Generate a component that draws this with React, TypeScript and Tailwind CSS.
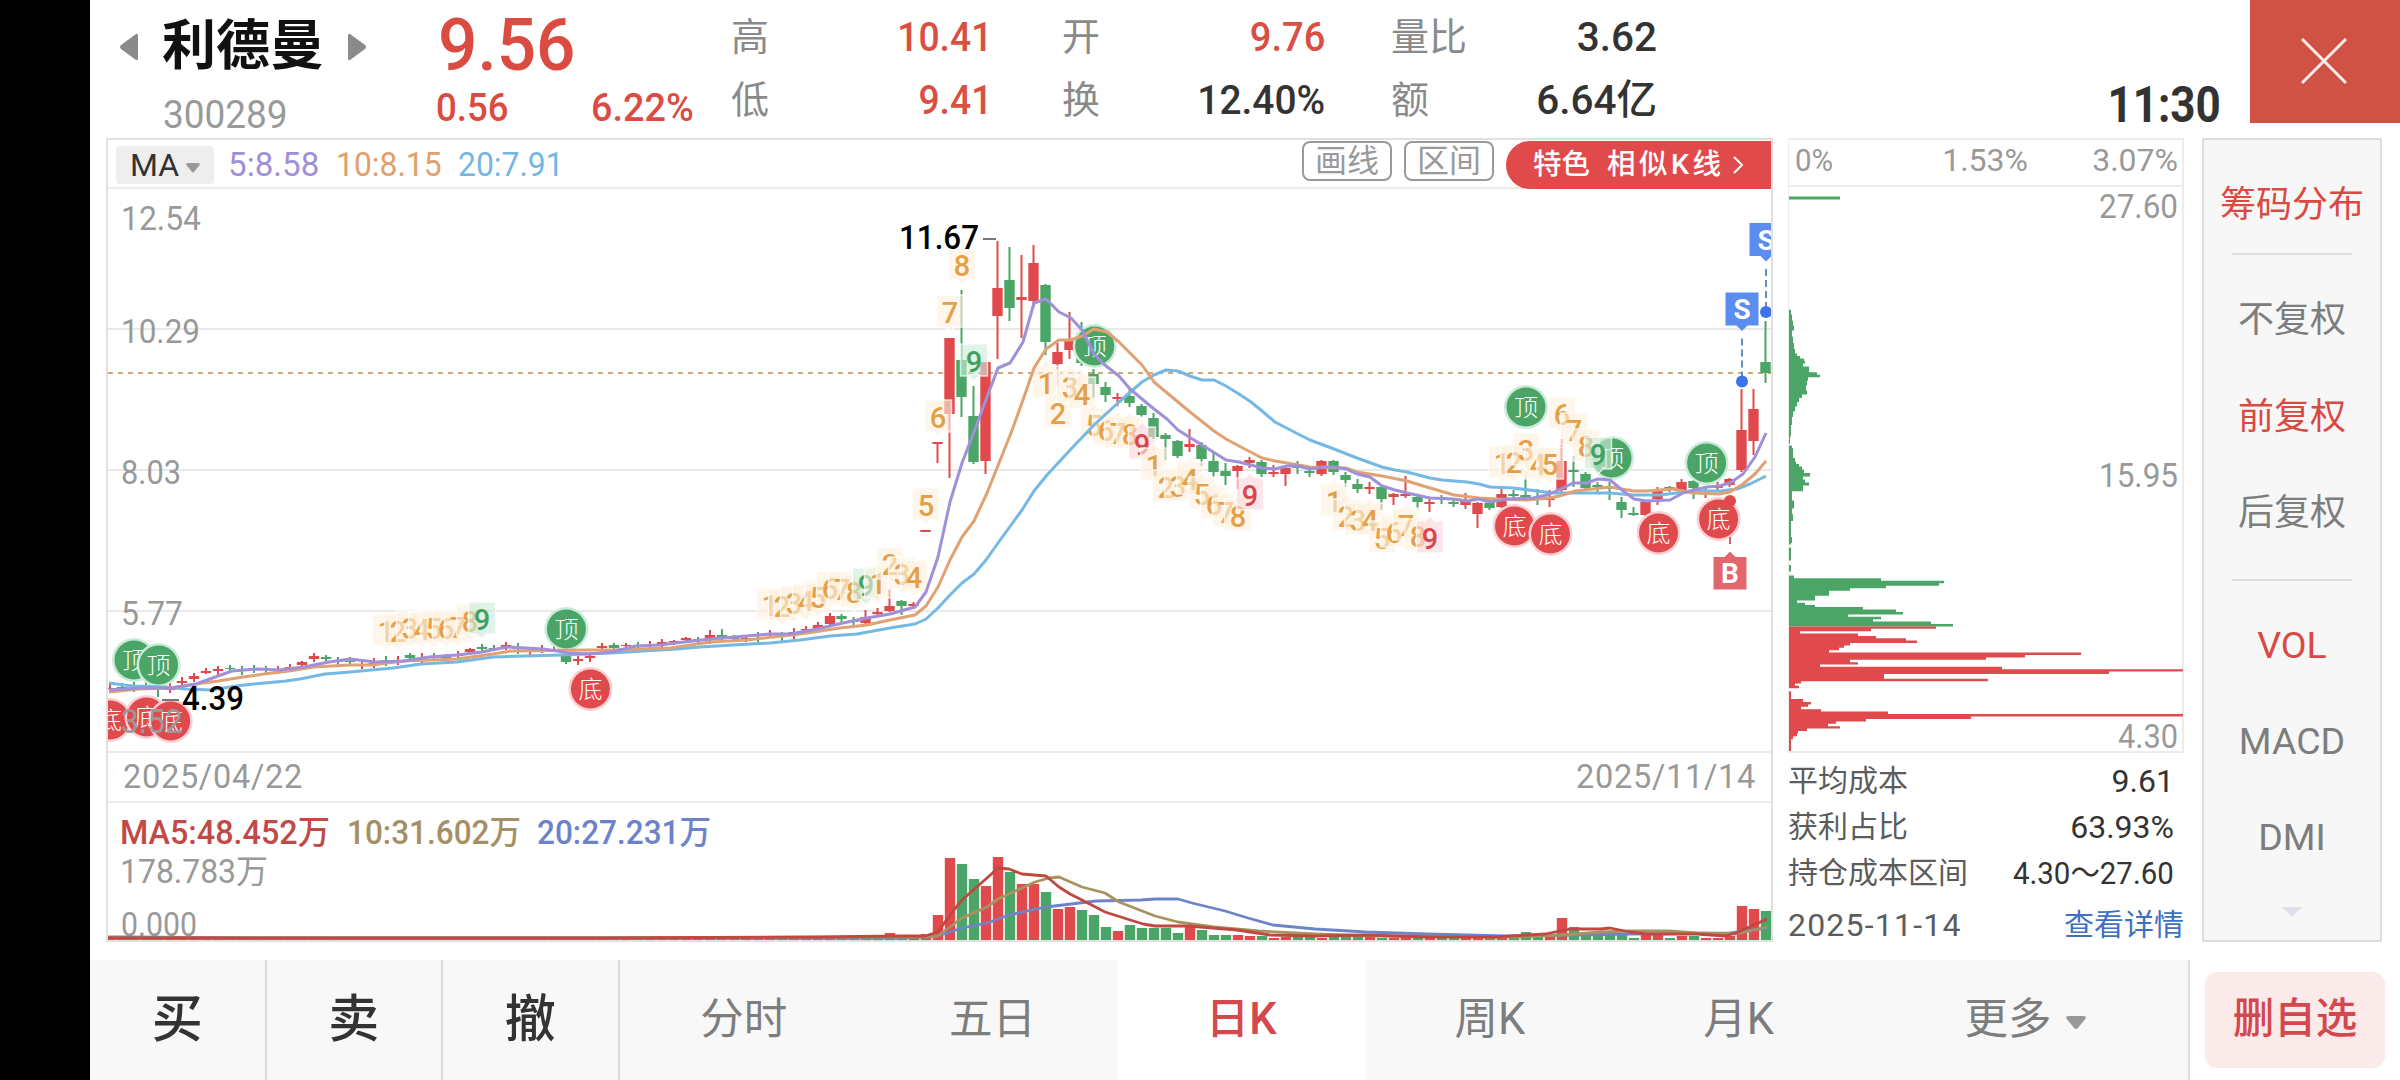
import React, { useState } from "react";

const RED = "#e04a4c";
const GREEN = "#4ba566";

type Dir = "r" | "g";
// [direction, high, body top, body bottom, low]
type Candle = [Dir, number, number, number, number];

const candles: Candle[] = [
  ["r", 684, 688, 689, 693],
  ["g", 683, 687, 688, 691],
  ["g", 682, 686, 687, 692],
  ["g", 680, 685, 686, 690],
  ["g", 682, 686, 688, 697],
  ["r", 682, 686, 690, 693],
  ["r", 677, 681, 683, 685],
  ["r", 673, 676, 679, 682],
  ["r", 668, 671, 673, 674],
  ["r", 666, 669, 671, 675],
  ["g", 665, 668, 669, 672],
  ["g", 666, 670, 671, 675],
  ["g", 665, 668, 669, 673],
  ["g", 666, 669, 670, 674],
  ["r", 666, 669, 670, 674],
  ["r", 664, 667, 668, 672],
  ["r", 661, 662, 665, 666],
  ["r", 653, 656, 659, 662],
  ["g", 655, 657, 659, 662],
  ["g", 657, 661, 662, 666],
  ["g", 657, 661, 662, 665],
  ["r", 660, 664, 666, 669],
  ["r", 658, 663, 664, 668],
  ["g", 656, 660, 661, 666],
  ["r", 656, 660, 661, 665],
  ["g", 653, 655, 658, 661],
  ["r", 653, 658, 661, 663],
  ["g", 653, 657, 658, 661],
  ["g", 654, 657, 658, 661],
  ["r", 651, 655, 656, 658],
  ["r", 648, 649, 652, 654],
  ["g", 644, 647, 649, 651],
  ["g", 645, 648, 649, 651],
  ["r", 642, 645, 647, 650],
  ["g", 643, 647, 649, 654],
  ["r", 648, 651, 652, 655],
  ["r", 645, 649, 650, 653],
  ["r", 646, 649, 650, 652],
  ["g", 655, 656, 662, 664],
  ["r", 656, 659, 661, 665],
  ["r", 653, 656, 658, 662],
  ["r", 643, 646, 648, 651],
  ["g", 643, 645, 648, 650],
  ["r", 643, 645, 646, 651],
  ["g", 642, 645, 646, 650],
  ["r", 641, 645, 646, 650],
  ["r", 639, 642, 645, 647],
  ["r", 640, 641, 642, 645],
  ["r", 637, 638, 640, 643],
  ["g", 637, 639, 640, 643],
  ["r", 630, 635, 638, 644],
  ["g", 629, 635, 637, 640],
  ["g", 635, 638, 639, 642],
  ["r", 635, 638, 639, 642],
  ["g", 632, 634, 636, 642],
  ["r", 630, 633, 635, 638],
  ["g", 632, 634, 636, 641],
  ["r", 628, 632, 634, 639],
  ["r", 626, 629, 630, 633],
  ["r", 622, 625, 628, 630],
  ["r", 613, 616, 624, 625],
  ["g", 614, 616, 619, 622],
  ["g", 617, 620, 622, 625],
  ["r", 610, 617, 623, 624],
  ["r", 608, 612, 614, 617],
  ["r", 589, 606, 611, 612],
  ["g", 600, 601, 606, 615],
  ["r", 602, 604, 606, 609],
  ["r", 530, 530, 532, 532],
  ["r", 442, 442, 444, 463],
  ["r", 338, 338, 414, 478],
  ["g", 290, 360, 397, 417],
  ["g", 386, 416, 462, 464],
  ["r", 362, 362, 461, 474],
  ["r", 241, 288, 316, 359],
  ["g", 247, 280, 308, 321],
  ["r", 255, 297, 300, 338],
  ["r", 245, 263, 301, 307],
  ["g", 284, 285, 342, 355],
  ["r", 343, 352, 364, 386],
  ["r", 312, 340, 350, 359],
  ["g", 322, 333, 363, 366],
  ["g", 369, 374, 384, 398],
  ["g", 382, 387, 395, 402],
  ["r", 393, 397, 399, 406],
  ["g", 390, 396, 403, 407],
  ["g", 404, 406, 415, 417],
  ["g", 413, 418, 437, 439],
  ["g", 433, 435, 439, 460],
  ["g", 440, 441, 456, 458],
  ["r", 429, 444, 447, 452],
  ["g", 442, 445, 459, 466],
  ["g", 453, 461, 472, 477],
  ["g", 463, 471, 476, 485],
  ["r", 465, 466, 471, 489],
  ["r", 457, 460, 463, 468],
  ["g", 460, 462, 474, 477],
  ["r", 465, 472, 474, 477],
  ["r", 467, 468, 474, 486],
  ["g", 461, 466, 468, 474],
  ["g", 469, 471, 473, 477],
  ["r", 460, 461, 474, 476],
  ["g", 460, 461, 472, 475],
  ["g", 472, 475, 480, 487],
  ["g", 479, 484, 489, 493],
  ["r", 482, 487, 489, 494],
  ["g", 486, 487, 499, 510],
  ["r", 493, 494, 497, 505],
  ["r", 476, 494, 496, 498],
  ["g", 494, 497, 502, 509],
  ["r", 498, 502, 504, 512],
  ["g", 495, 497, 499, 504],
  ["g", 500, 502, 504, 507],
  ["r", 493, 501, 505, 509],
  ["r", 502, 503, 514, 528],
  ["g", 500, 503, 508, 510],
  ["r", 489, 494, 507, 508],
  ["g", 490, 494, 496, 499],
  ["g", 475, 495, 497, 500],
  ["g", 489, 497, 499, 505],
  ["r", 490, 498, 500, 507],
  ["r", 439, 461, 490, 493],
  ["g", 456, 470, 472, 487],
  ["g", 472, 474, 488, 490],
  ["g", 482, 485, 487, 493],
  ["g", 482, 488, 489, 500],
  ["g", 497, 502, 510, 518],
  ["g", 507, 513, 515, 516],
  ["r", 501, 502, 515, 516],
  ["r", 487, 490, 499, 505],
  ["g", 486, 487, 489, 492],
  ["r", 479, 482, 490, 492],
  ["g", 480, 481, 488, 499],
  ["r", 487, 491, 492, 498],
  ["r", 482, 486, 488, 492],
  ["r", 478, 479, 485, 487],
  ["r", 389, 430, 470, 472],
  ["r", 389, 409, 441, 455],
  ["g", 321, 362, 373, 383],
];

const candleX = (i: number) => 110 + i * 12;

const ma5 =
  "109,690 139,688 171,688 196,684 218,676 232,671 257,669 279,670 304,667 329,662 350,659 375,662 404,661 429,657 457,655 482,652 507,647 543,649 557,651 568,653 589,654 611,652 636,646 660,645 675,643 711,639 770,634 790,634 817,629 843,623 867,618 890,614 915,607 926,592 938,557 950,502 962,463 974,432 987,397 998,368 1010,363 1023,342 1034,303 1046,299 1059,312 1071,318 1082,330 1094,354 1106,366 1119,376 1130,389 1142,399 1154,409 1167,419 1178,430 1202,445 1226,460 1239,462 1251,465 1262,468 1275,469 1287,466 1298,466 1310,469 1323,467 1334,467 1346,469 1357,474 1370,477 1382,486 1395,490 1407,493 1430,498 1453,499 1467,501 1479,499 1490,502 1507,499 1533,498 1547,495 1563,488 1573,483 1586,483 1598,479 1610,480 1622,490 1634,499 1646,501 1670,500 1683,493 1694,490 1707,487 1719,486 1730,483 1743,474 1755,457 1766,433";
const ma10 =
  "109,692 139,689 171,688 196,684 218,681 243,677 264,674 289,671 314,667 350,665 371,665 404,661 457,659 493,654 511,651 589,650 615,650 640,649 670,648 711,642 747,640 800,634 840,628 867,625 890,620 915,615 926,606 938,587 950,560 962,537 974,521 987,493 999,463 1011,433 1023,400 1034,368 1046,349 1059,340 1071,340 1082,336 1094,329 1107,332 1119,342 1130,353 1142,365 1154,382 1178,402 1190,412 1214,431 1226,439 1239,446 1262,458 1275,461 1287,463 1310,467 1346,468 1357,472 1382,476 1407,481 1430,488 1454,495 1479,498 1497,499 1527,500 1550,498 1563,495 1575,491 1610,487 1622,489 1634,491 1646,491 1673,489 1693,493 1719,494 1730,492 1743,484 1755,474 1766,461";
const ma20 =
  "109,683 132,686 164,687 186,689 211,690 236,686 254,684 286,681 300,679 325,674 350,672 393,668 421,664 457,662 493,657 525,656 561,655 611,653 677,649 700,647 733,645 770,643 800,640 830,636 857,634 890,628 915,624 926,619 938,608 950,595 962,583 974,574 986,560 998,543 1022,510 1034,491 1047,475 1071,449 1094,425 1119,402 1142,382 1154,375 1166,370 1178,371 1190,376 1202,380 1214,380 1226,386 1239,394 1251,402 1262,411 1275,422 1300,435 1310,440 1334,449 1357,458 1382,467 1395,470 1407,472 1430,478 1442,480 1467,482 1479,484 1490,487 1513,488 1553,493 1610,493 1633,495 1660,495 1693,491 1720,491 1737,489 1750,484 1766,476";

type Tone = "o" | "g" | "r";
// [candle index, digit, top of the box, tone]
type Count = [number, string, number, Tone];

const countsAbove: Count[] = [
  [23, "1", 614, "o"],
  [24, "2", 614, "o"],
  [25, "3", 611, "o"],
  [26, "4", 612, "o"],
  [27, "5", 611, "o"],
  [28, "6", 611, "o"],
  [29, "7", 610, "o"],
  [30, "8", 604, "o"],
  [31, "9", 602, "g"],
  [55, "1", 588, "o"],
  [56, "2", 589, "o"],
  [57, "3", 586, "o"],
  [58, "4", 584, "o"],
  [59, "5", 580, "o"],
  [60, "6", 571, "o"],
  [61, "7", 572, "o"],
  [62, "8", 575, "o"],
  [63, "9", 568, "g"],
  [64, "1", 566, "o"],
  [65, "2", 547, "o"],
  [66, "3", 557, "o"],
  [67, "4", 560, "o"],
  [68, "5", 488, "o"],
  [69, "6", 400, "o"],
  [70, "7", 295, "o"],
  [71, "8", 248, "o"],
  [72, "9", 344, "g"],
  [116, "1", 446, "o"],
  [117, "2", 445, "o"],
  [118, "3", 433, "o"],
  [119, "4", 447, "o"],
  [120, "5", 447, "o"],
  [121, "6", 397, "o"],
  [122, "7", 413, "o"],
  [123, "8", 429, "o"],
  [124, "9", 437, "g"],
];

const countsBelow: Count[] = [
  [78, "1", 366, "o"],
  [79, "2", 396, "o"],
  [80, "3", 370, "o"],
  [81, "4", 377, "o"],
  [82, "5", 408, "o"],
  [83, "6", 413, "o"],
  [84, "7", 416, "o"],
  [85, "8", 417, "o"],
  [86, "9", 427, "r"],
  [87, "1", 448, "o"],
  [88, "2", 470, "o"],
  [89, "3", 469, "o"],
  [90, "4", 462, "o"],
  [91, "5", 477, "o"],
  [92, "6", 487, "o"],
  [93, "7", 495, "o"],
  [94, "8", 499, "o"],
  [95, "9", 478, "r"],
  [102, "1", 484, "o"],
  [103, "2", 499, "o"],
  [104, "3", 503, "o"],
  [105, "4", 503, "o"],
  [106, "5", 521, "o"],
  [107, "6", 515, "o"],
  [108, "7", 508, "o"],
  [109, "8", 519, "o"],
  [110, "9", 521, "r"],
];

const toneFill = { o: "#fdf0df", g: "#cbecda", r: "#fbd6dc" };
const toneText = { o: "#e3a048", g: "#3fa262", r: "#d9454c" };

const tops: [number, number][] = [
  [134, 660],
  [158.6, 665],
  [566.4, 629],
  [1094.7, 346],
  [1526, 407],
  [1612, 458],
  [1706.6, 463],
];
const bottoms: [number, number][] = [
  [110, 720],
  [146.5, 717],
  [170.7, 721],
  [590.4, 689],
  [1514.5, 526],
  [1550.5, 534],
  [1658.5, 533],
  [1718.6, 519],
];

const volumes: number[] = [
  ...Array(60).fill(2),
  3, 3, 4, 3, 4, 7, 5, 4, 6,
  25, 82, 76, 61, 54, 83, 68, 56, 56, 48, 31, 33, 30, 25, 13, 9, 15, 12, 12, 12,
  7, 13, 10, 5, 5, 5, 4, 4, 2, 3, 4, 3, 2, 4, 4, 4, 3, 2, 2, 3, 2, 2, 2, 2, 2, 2,
  2, 3, 4, 8, 5, 3, 22, 13, 7, 8, 8, 6, 2, 5, 5, 2, 4, 4, 2, 2, 4, 34, 31, 29,
];

const volMa5 =
  "108,938 600,938 820,937 900,936 925,936 938,932 950,915 962,900 987,878 998,868 1009,869 1022,874 1046,876 1059,887 1070,894 1082,900 1105,912 1143,924 1155,926 1191,926 1200,927 1237,930 1270,935 1315,936 1366,935 1427,937 1495,937 1545,934 1570,929 1601,929 1610,928 1630,932 1646,934 1697,934 1725,936 1736,933 1767,919";
const volMa10 =
  "108,938 600,938 900,937 925,937 938,936 962,918 987,907 998,899 1035,882 1049,878 1059,877 1082,887 1105,893 1119,902 1155,916 1178,922 1214,927 1259,931 1315,934 1377,936 1517,937 1562,935 1601,932 1630,931 1669,931 1697,933 1736,934 1767,927";
const volMa20 =
  "108,937 130,937 250,938 900,938 925,937 938,936 962,928 987,923 1009,915 1046,907 1096,901 1141,900 1155,899 1178,899 1192,903 1225,911 1248,918 1273,925 1315,929 1366,932 1427,934 1506,936 1573,935 1630,934 1730,933 1753,930 1767,928";

// [y, width] of every price level in the cost distribution
const chipsHigh: [number, number][] = [
  [311, 2], [318, 3], [323, 4], [328, 5], [333, 3], [340, 4], [346, 5], [352, 6],
  [355, 8], [357, 11], [360, 15], [362, 16], [365, 14], [368, 20], [371, 20],
  [373.5, 28], [376, 31], [378.5, 19], [383, 18], [388, 17], [393, 18], [396, 13],
  [400, 10], [404, 8], [409, 6], [414, 4], [420, 3], [430, 2], [443, 1], [445, 0],
  [446, 3], [450, 4], [456, 4], [460, 6], [463, 7], [465, 10], [468, 13], [471, 15],
  [475, 21], [478, 14], [481, 16], [484, 20], [487, 14], [490, 14], [492.5, 3],
  [498, 3], [503, 5], [507, 5], [510, 3], [518, 4], [524, 2], [532, 2], [542, 3],
  [544, 2], [545, 0], [550, 2], [560, 2], [561, 0], [569, 2], [574, 0], [577, 5],
  [579.6, 92], [582, 155], [584.7, 150], [587, 97], [589.6, 61], [592, 40],
  [594.6, 40], [597, 26], [599.3, 26], [601.6, 8], [603.8, 16], [606, 26],
  [608.2, 74], [610.8, 107], [613.3, 114], [615.7, 59], [618, 92], [620.4, 84],
  [622.8, 142], [625.2, 164],
];
const chipsLow: [number, number][] = [
  [627.6, 147], [630, 82], [632.4, 11], [634.8, 69], [637, 87], [639.4, 117],
  [641.8, 128], [644.2, 61], [646.6, 55], [649, 50], [651.3, 40], [653.7, 292],
  [656.2, 236], [658.6, 197], [661, 61], [663.3, 69], [665.6, 31], [668, 213],
  [670.3, 395], [672.7, 320], [675.2, 95], [677.6, 95], [680, 199], [682.4, 12],
  [684.7, 6], [687, 10], [689.3, 0], [693, 2], [697, 2], [700.8, 14], [703.4, 22],
  [705.7, 19], [708, 12], [710.4, 32], [712.8, 99], [715.3, 395], [717.8, 182],
  [720.2, 77], [722.6, 47], [725, 39], [727.4, 51], [729.8, 18], [732, 9],
  [735, 8], [737.5, 4], [741, 2], [750, 2],
];

const stepPath = (rows: [number, number][]) => {
  let d = `M0 ${rows[0][0] - 1.2}`;
  rows.forEach(([y, w], i) => {
    const next = rows[i + 1];
    const end = next ? (y + next[0]) / 2 : y + 1.2;
    d += `H${w}V${end}`;
  });
  return `${d}H0Z`;
};

interface LabelProps {
  x: number;
  y: number;
  w: number;
  fill?: string;
  weight?: number;
  children: string;
}

const Label: React.FC<LabelProps> = ({ x, y, w, fill = "#999", weight = 400, children }) => (
  <text
    x={x}
    y={y}
    fill={fill}
    fontSize={32.5}
    fontWeight={weight}
    textLength={w}
    lengthAdjust="spacingAndGlyphs"
  >
    {children}
  </text>
);

const CountBadge: React.FC<{ item: Count; below?: boolean }> = ({ item, below }) => {
  const [i, digit, top, tone] = item;
  const x = candleX(i);
  const d = below
    ? `M${x - 13.5} ${top}H${x - 5}L${x} ${top - 5}L${x + 5} ${top}H${x + 13.5}V${top + 32}H${x - 13.5}Z`
    : `M${x - 13.5} ${top}H${x + 13.5}V${top + 32}H${x + 5}L${x} ${top + 37}L${x - 5} ${top + 32}H${x - 13.5}Z`;
  return (
    <g>
      <path d={d} fill={toneFill[tone]} fillOpacity={0.62} stroke="#fff" strokeOpacity={0.7} strokeWidth={1.5} />
      <text x={x} y={top + 28} textAnchor="middle" fontSize={29} fontWeight={500} fill={toneText[tone]}>
        {digit}
      </text>
    </g>
  );
};

const Signal: React.FC<{ x: number; y: number; top?: boolean }> = ({ x, y, top }) => (
  <g>
    <circle cx={x} cy={y} r={22} fill={top ? "#c9ecd8" : "#fad0d5"} />
    <circle cx={x} cy={y} r={19.5} fill={top ? GREEN : RED} />
    <text x={x} y={y + 9} textAnchor="middle" fontSize={24} fontWeight={300} fill="#fff">
      {top ? "顶" : "底"}
    </text>
  </g>
);

const SellTag: React.FC<{ x: number; y: number }> = ({ x, y }) => (
  <g>
    <path d={`M${x - 16.5} ${y}h33v33h-11l-5.500 5.500l-5.500 -5.500h-11z`} fill="#5b8cf0" />
    <text x={x} y={y + 26.5} textAnchor="middle" fontSize={28} fontWeight={700} fill="#fff">
      S
    </text>
    <path d={`M${x} ${y + 46}v38`} stroke="#5f8fc4" strokeWidth={2} strokeDasharray="7 4" />
    <circle cx={x} cy={y + 89} r={6} fill="#3d73ea" />
  </g>
);

const PriceChart: React.FC = () => (
  <svg viewBox="108 189 1663 562" className="block h-[562px] w-[1663px]">
    {[329, 470, 611].map((y) => (
      <path key={y} d={`M108 ${y}H1771`} stroke="#e9e9e9" strokeWidth={2} />
    ))}
    <path d="M108 373H1771" stroke="#c8ab82" strokeWidth={2} strokeDasharray="5 5" />

    {candles.map(([dir, high, top, bottom, low], i) => {
      const x = candleX(i) - (i > 60 ? 0.5 : 0);
      const color = dir === "r" ? RED : GREEN;
      return (
        <g key={i} fill={color}>
          <rect x={x - 1} y={high} width={2} height={low - high} />
          <rect x={x - 5.2} y={top} width={10.4} height={bottom - top} />
        </g>
      );
    })}

    {tops.map(([x, y]) => (
      <Signal key={`${x}-${y}`} x={x} y={y} top />
    ))}
    {bottoms.map(([x, y]) => (
      <Signal key={`${x}-${y}`} x={x} y={y} />
    ))}

    {countsAbove.map((item) => (
      <CountBadge key={item[0]} item={item} />
    ))}
    {countsBelow.map((item) => (
      <CountBadge key={item[0]} item={item} below />
    ))}

    <g fill="none" strokeWidth={3} strokeLinejoin="round">
      <polyline points={ma20} stroke="#76b8e4" />
      <polyline points={ma10} stroke="#e0a273" />
      <polyline points={ma5} stroke="#a08fd9" />
    </g>

    <SellTag x={1742} y={292.5} />
    <SellTag x={1766} y={223} />
    <circle cx={1730} cy={501} r={6} fill={RED} />
    <path d="M1730 537v11" stroke="#d0646a" strokeWidth={2} strokeDasharray="7 4" />
    <path d="M1713.500 557h11l5.500 -5.500l5.500 5.500h11v32.500h-33z" fill="#e2666c" />
    <text x={1730} y={583} textAnchor="middle" fontSize={28} fontWeight={700} fill="#fff">
      B
    </text>

    <Label x={121} y={230} w={80}>12.54</Label>
    <Label x={121} y={343} w={79}>10.29</Label>
    <Label x={121} y={484} w={60}>8.03</Label>
    <Label x={121} y={625} w={62}>5.77</Label>
    <Label x={121} y={733} w={62}>3.52</Label>

    <path d="M983 239H996M162 700H179" stroke="#777" strokeWidth={2} />
    <Label x={899} y={249} w={80} fill="#000" weight={500}>11.67</Label>
    <Label x={182} y={710} w={62} fill="#000" weight={500}>4.39</Label>
  </svg>
);

const VolumeChart: React.FC = () => (
  <svg viewBox="108 803 1663 137" className="block h-[137px] w-[1663px]">
    <Label x={120} y={844} w={210} fill="#c04a48" weight={500}>MA5:48.452万</Label>
    <Label x={347} y={844} w={174} fill="#a58f64" weight={500}>10:31.602万</Label>
    <Label x={537} y={844} w={174} fill="#6c82cb" weight={500}>20:27.231万</Label>
    <Label x={120} y={883} w={148}>178.783万</Label>
    <Label x={121} y={936} w={76}>0.000</Label>
    {volumes.map((h, i) => (
      <rect
        key={i}
        x={candleX(i) - 5.2}
        y={940 - h}
        width={10.4}
        height={h}
        fill={candles[i][0] === "r" ? RED : GREEN}
      />
    ))}
    <g fill="none" strokeWidth={2.8} strokeLinejoin="round">
      <polyline points={volMa20} stroke="#6f84c8" />
      <polyline points={volMa10} stroke="#a8925f" />
      <polyline points={volMa5} stroke="#c04840" />
    </g>
  </svg>
);

const quotes = [
  { label: "高", value: "10.41", style: "pr-[70px]", color: "scale-x-[.92] text-[#d94f43]" },
  { label: "开", value: "9.76", style: "pr-[66px]", color: "scale-x-[.94] text-[#d94f43]" },
  { label: "量比", value: "3.62", style: "pr-[2px]", color: "scale-x-[1] text-[#333]" },
  { label: "低", value: "9.41", style: "pr-[70px]", color: "scale-x-[.92] text-[#d94f43]" },
  { label: "换", value: "12.40%", style: "pr-[66px]", color: "scale-x-[.96] text-[#333]" },
  { label: "额", value: "6.64亿", style: "pr-[2px]", color: "scale-x-[1] text-[#333]" },
];

const Header: React.FC = () => (
  <header className="flex h-[138px] shrink-0">
    <div className="w-[348px] pl-[30px] pt-[17px]">
      <div className="flex h-[60px] items-center">
        <svg viewBox="0 0 18 28" className="h-7 w-[18px] fill-[#8a8a8a]">
          <path d="M16 1Q18 0 18 3V25Q18 28 16 27L1 16Q-1 14 1 12Z" />
        </svg>
        <h1 className="ml-[24px] text-[54px] font-bold leading-[64px] text-[#111]">利德曼</h1>
        <svg viewBox="0 0 18 28" className="ml-[24px] h-7 w-[18px] shrink-0 fill-[#8a8a8a]">
          <path d="M2 1Q0 0 0 3V25Q0 28 2 27L17 16Q19 14 17 12Z" />
        </svg>
      </div>
      <p className="ml-[43px] origin-left scale-x-[.96] text-[38.500px] leading-[75px] text-[#999]">300289</p>
    </div>
    <div className="w-[293px] text-[#dc4b41]">
      <p className="mt-[15px] origin-left scale-x-[.95] text-[73px] font-medium leading-[60px]">9.56</p>
      <div className="flex w-[256px] justify-between text-[38.500px] font-medium leading-[65px]">
        <span className="-ml-0.5 origin-left scale-x-[.95]">0.56</span>
        <span className="origin-right scale-x-[.98]">6.22%</span>
      </div>
    </div>
    <div className="grid grid-cols-[331px_329px_268px] content-start pt-[6px] leading-[63px]">
      {quotes.map((q) => (
        <div key={q.label} className={`flex justify-between ${q.style}`}>
          <span className="text-[38px] text-[#8a8a8a]">{q.label}</span>
          <span className={`origin-right text-[40.500px] font-medium ${q.color}`}>{q.value}</span>
        </div>
      ))}
    </div>
    <div className="ml-auto flex">
      <time className="mr-[29px] origin-right scale-x-[.88] pt-[75px] text-[50px] font-bold leading-[60px] text-[#333]">11:30</time>
      <button className="flex h-[123px] w-[150px] items-center justify-center bg-[#d05244]">
        <svg viewBox="0 0 46 46" className="-mt-0.5 -ml-0.5 h-[46px] w-[46px]">
          <path d="M1 1L45 45M45 1L1 45" stroke="#fdeceb" strokeWidth={3} />
        </svg>
      </button>
    </div>
  </header>
);

const ChartPanel: React.FC = () => (
  <section className="w-[1667px] border-2 border-[#e0e0e0]">
    <div className="flex h-[49px] items-start border-b-2 border-[#ececec]">
      <button className="ml-2 mt-1.5 flex h-[38px] w-[98px] items-center justify-center gap-[7px] rounded bg-[#eee] text-[32px] text-[#333]">
        <span>MA</span>
        <svg viewBox="0 0 14 10" className="mt-1.5 h-2.5 w-3.5 fill-[#999]">
          <path d="M0 1.500Q0 0 2 0H12Q14 0 14 1.500L8 9Q7 10 6 9Z" />
        </svg>
      </button>
      <div className="flex text-[32.500px] leading-[50px]">
        <span className="ml-[14px] w-[108px] origin-left scale-x-[1.02] text-[#a08fd8]">5:8.58</span>
        <span className="w-[122px] origin-left scale-x-[.98] text-[#e0a06e]">10:8.15</span>
        <span className="origin-left scale-x-[.98] text-[#74b6e3]">20:7.91</span>
      </div>
      <div className="ml-auto flex pt-px">
        <button className="mr-3 h-10 w-[90px] rounded-lg border-2 border-[#999] text-[32px] leading-[36px] text-[#999]">画线</button>
        <button className="mr-3 h-10 w-[90px] rounded-lg border-2 border-[#999] text-[32px] leading-[36px] text-[#999]">区间</button>
        <button className="flex h-12 w-[265px] items-center rounded-l-full bg-[#e14a4b] pl-[27px] text-[28.500px] font-medium text-white">
          <span>特色</span>
          <span className="ml-[17px] tracking-[3.500px]">相似K线</span>
          <svg viewBox="0 0 10 18" className="ml-2 h-[18px] w-2.5 fill-none stroke-white">
            <path d="M1 1L9 9L1 17" strokeWidth={2} />
          </svg>
        </button>
      </div>
    </div>
    <PriceChart />
    <div className="flex h-[52px] justify-between border-y-2 border-[#ececec] px-[15px] text-[32.500px] leading-[48px] text-[#999]">
      <span className="tracking-[.7px]">2025/04/22</span>
      <span className="tracking-[.7px]">2025/11/14</span>
    </div>
    <VolumeChart />
  </section>
);

const chipStats = [
  { label: "平均成本", value: "9.61" },
  { label: "获利占比", value: "63.93%" },
  { label: "持仓成本区间", value: "4.30～27.60" },
];

const ChipPanel: React.FC = () => (
  <section className="ml-[15px] w-[396px]">
    <div className="border-2 border-l border-[#ececec]">
      <div className="flex h-[47px] justify-between border-b-2 border-[#ececec] pl-1.5 pr-1 text-[32px] leading-[40px] text-[#999]">
        <span className="w-[83px] origin-left scale-x-[.92]">0%</span>
        <span className="origin-center">1.53%</span>
        <span className="origin-right">3.07%</span>
      </div>
      <svg viewBox="0 187 393 564" className="-ml-px block h-[564px] w-[395px]">
        <rect x={0} y={196.5} width={51} height={3} fill={GREEN} />
        <path d={stepPath(chipsHigh)} fill={GREEN} />
        <path d={stepPath(chipsLow)} fill={RED} />
        <Label x={310} y={218} w={79}>27.60</Label>
        <Label x={310} y={487} w={79}>15.95</Label>
        <Label x={329} y={748} w={60}>4.30</Label>
      </svg>
    </div>
    <dl className="pt-[5px] leading-[46px]">
      {chipStats.map((s) => (
        <div key={s.label} className="flex justify-between pr-2.5">
          <dt className="text-[30px] text-[#5c5c5c]">{s.label}</dt>
          <dd
            className={`origin-right text-[32px] text-[#333] ${
              s.value.includes("～") ? "scale-x-[.92]" : "scale-x-[1]"
            }`}
          >
            {s.value}
          </dd>
        </div>
      ))}
    </dl>
    <div className="flex justify-between pt-[2px] text-[30px] leading-[54px]">
      <span className="text-[32px] tracking-[1.200px] text-[#5c5c5c]">2025-11-14</span>
      <a className="text-[#3f70c2]">查看详情</a>
    </div>
  </section>
);

const SideMenu: React.FC = () => {
  const [adjust, setAdjust] = useState("前复权");
  const [indicator, setIndicator] = useState("VOL");

  return (
    <aside className="ml-[18px] flex h-[804px] w-[180px] flex-col items-center border-2 border-[#ddd] bg-[#f7f7f7] text-[36px] text-[#7d7d7d]">
      <button className="h-[113px] pt-4 text-[#d94a42]">筹码分布</button>
      <hr className="w-[120px] border-t-2 border-[#dcdcdc]" />
      <div className="flex flex-col pt-[17px]">
        {["不复权", "前复权", "后复权"].map((name) => (
          <button
            key={name}
            onClick={() => setAdjust(name)}
            className={`h-[96.500px] ${adjust === name ? "text-[#d94a42]" : ""}`}
          >
            {name}
          </button>
        ))}
      </div>
      <hr className="mt-[17px] w-[120px] border-t-2 border-[#dcdcdc]" />
      <div className="flex flex-col pt-[17px] text-[37.500px]">
        {["VOL", "MACD", "DMI"].map((name) => (
          <button
            key={name}
            onClick={() => setIndicator(name)}
            className={`h-[96px] ${indicator === name ? "text-[#d94a42]" : ""}`}
          >
            {name}
          </button>
        ))}
      </div>
      <svg viewBox="0 0 20 10" className="mt-[21px] h-2.5 w-5 fill-[#dde0ea]">
        <path d="M0 0H20L10 10Z" />
      </svg>
    </aside>
  );
};

const periods = ["分时", "五日", "日K", "周K", "月K"];

const BottomBar: React.FC = () => {
  const [period, setPeriod] = useState("日K");

  return (
    <footer className="mt-[18px] flex h-[120px] shrink-0">
      <div className="flex w-[2100px] border-r-2 border-[#dcdcdc] bg-[#f8f8f8]">
        {["买", "卖", "撤"].map((name) => (
          <button
            key={name}
            className="w-[176.500px] border-r-2 border-[#dcdcdc] text-[51px] font-medium text-[#333]"
          >
            {name}
          </button>
        ))}
        {periods.map((name) => (
          <button
            key={name}
            onClick={() => setPeriod(name)}
            className={`w-[248.700px] text-[43.500px] ${
              period === name ? "bg-white font-medium text-[#d4494b]" : "text-[#7d7d7d]"
            }`}
          >
            {name}
          </button>
        ))}
        <button className="flex grow items-center justify-center gap-[15px] text-[43.500px] text-[#7d7d7d]">
          更多
          <svg viewBox="0 0 20 13" className="mt-1 h-[13px] w-5 fill-[#999]">
            <path d="M0 2Q0 0 2 0H18Q20 0 20 2L12 12Q10 14 8 12Z" />
          </svg>
        </button>
      </div>
      <button className="ml-[15px] mt-3 h-24 w-[180px] rounded-xl bg-[#fbeaea] pb-0.5 text-[41.500px] font-medium text-[#d4484d]">
        删自选
      </button>
    </footer>
  );
};

const App: React.FC = () => (
  <div className="flex h-[1080px] w-[2400px] overflow-hidden bg-white font-[Roboto,'Noto_Sans_CJK_SC',sans-serif]">
    <div className="w-[90px] shrink-0 bg-black" />
    <div className="flex w-[2310px] flex-col">
      <Header />
      <main className="flex h-[804px] shrink-0 pl-[16px]">
        <ChartPanel />
        <ChipPanel />
        <SideMenu />
      </main>
      <BottomBar />
    </div>
  </div>
);

export default App;
